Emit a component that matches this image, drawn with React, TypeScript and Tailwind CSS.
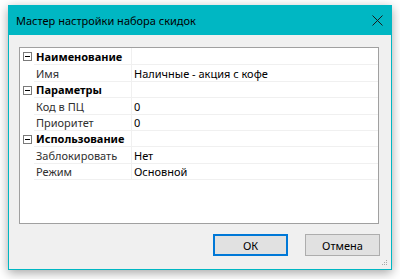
import React from "react";

/* ================= DATA ================= */

type Row =
  | { kind: "cat"; label: string; h: string }
  | { kind: "prop"; label: string; value: string; h: string };

const rows: Row[] = [
  { kind: "cat", label: "Наименование", h: "h-[17px]" },
  { kind: "prop", label: "Имя", value: "Наличные - акция с кофе", h: "h-[17px]" },
  { kind: "cat", label: "Параметры", h: "h-[16px]" },
  { kind: "prop", label: "Код в ПЦ", value: "0", h: "h-[17px]" },
  { kind: "prop", label: "Приоритет", value: "0", h: "h-[16px]" },
  { kind: "cat", label: "Использование", h: "h-[16px]" },
  { kind: "prop", label: "Заблокировать", value: "Нет", h: "h-[17px]" },
  { kind: "prop", label: "Режим", value: "Основной", h: "h-[16px]" },
];

/* ================= ICONS ================= */

function MinusBox() {
  return (
    <svg width="9" height="9" viewBox="0 0 9 9" className="block">
      <rect x="0.5" y="0.5" width="8" height="8" fill="white" stroke="#7a7a7a" />
      <line x1="2" y1="4.5" x2="7" y2="4.5" stroke="#000" />
    </svg>
  );
}

function CloseIcon() {
  return (
    <svg width="11" height="11" viewBox="0 0 11 11" className="block">
      <path d="M0.5 0.5 L10.5 10.5 M10.5 0.5 L0.5 10.5" stroke="#1a1a1a" strokeWidth="1" />
    </svg>
  );
}

function Grip() {
  const dots = [
    [4, 0],
    [4, 2],
    [2, 2],
    [4, 4],
    [2, 4],
    [0, 4],
  ];
  return (
    <svg width="6" height="6" viewBox="0 0 6 6" className="block">
      {dots.map(([x, y], i) => (
        <rect key={i} x={x} y={y} width="1" height="1" fill="#a8a8a8" />
      ))}
    </svg>
  );
}

/* ================= MAIN ================= */

export default function App() {
  return (
    <div
      className="w-[400px] h-[279px] bg-white overflow-hidden pt-[5px] pl-[8px]"
      style={{ fontFamily: '"Noto Sans", "Open Sans", sans-serif' }}
    >
      <div className="relative w-[384px] h-[265px] border border-[#00b7c3] bg-[#f0f0f0] shadow-[0_3px_10px_rgba(0,0,0,0.35)] flex flex-col">
        {/* Title bar */}
        <div className="h-[29px] bg-[#00b7c3] flex items-center justify-between pl-[7px] pr-[8px] shrink-0">
          <span className="text-[11px] text-black leading-none">Мастер настройки набора скидок</span>
          <CloseIcon />
        </div>

        {/* Body */}
        <div className="flex-1 flex flex-col pt-[12px] pl-[10px] pr-[12px]">
          {/* Property grid */}
          <div className="h-[177px] border border-[#a0a0a0] bg-white text-[11px] leading-none">
            {rows.map((r, i) => (
              <div key={i} className={`flex ${r.h}`}>
                <div className="w-[14px] shrink-0 flex items-center justify-center">
                  {r.kind === "cat" && <MinusBox />}
                </div>
                <div className="flex-1 flex border-b border-[#f0f0f0]">
                  <div className="w-[98px] shrink-0 border-r border-[#f0f0f0] flex items-center pl-[2px]">
                    {r.kind === "cat" ? (
                      <span className="font-bold text-black whitespace-nowrap">{r.label}</span>
                    ) : (
                      <span className="text-[#303030] whitespace-nowrap">{r.label}</span>
                    )}
                  </div>
                  <div className="flex-1 flex items-center pl-[2px]">
                    {r.kind === "prop" && <span className="text-black whitespace-nowrap">{r.value}</span>}
                  </div>
                </div>
              </div>
            ))}
          </div>

          {/* Buttons */}
          <div className="flex justify-end gap-[17px] mt-[10px]">
            <button className="w-[75px] h-[22px] bg-[#e1e1e1] border-2 border-[#0078d7] text-[11px] text-black leading-none">
              ОК
            </button>
            <button className="w-[75px] h-[22px] bg-[#e1e1e1] border border-[#adadad] text-[11px] text-black leading-none mr-[-1px]">
              Отмена
            </button>
          </div>
        </div>

        <div className="absolute right-[3px] bottom-[3px]">
          <Grip />
        </div>
      </div>
    </div>
  );
}
